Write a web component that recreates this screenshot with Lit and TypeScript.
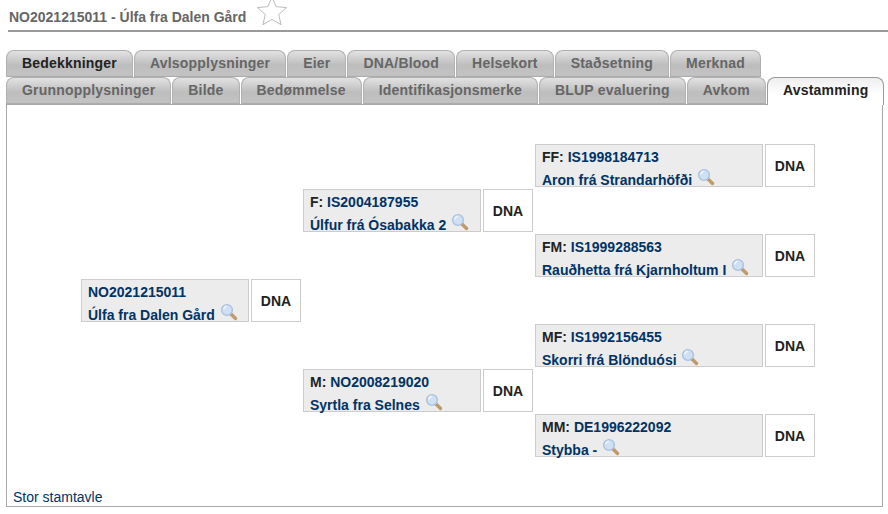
import { LitElement, html, css, svg } from "lit";
import { customElement } from "lit/decorators.js";

type Node = { row: number; col: number; label: string; name: string };

const NODES: Node[] = [
  { row: 1, col: 3, label: "FF: IS1998184713", name: "Aron frá Strandarhöfði" },
  { row: 2, col: 2, label: "F: IS2004187955", name: "Úlfur frá Ósabakka 2" },
  { row: 3, col: 3, label: "FM: IS1999288563", name: "Rauðhetta frá Kjarnholtum I" },
  { row: 4, col: 1, label: "NO2021215011", name: "Úlfa fra Dalen Gård" },
  { row: 5, col: 3, label: "MF: IS1992156455", name: "Skorri frá Blönduósi" },
  { row: 6, col: 2, label: "M: NO2008219020", name: "Syrtla fra Selnes" },
  { row: 7, col: 3, label: "MM: DE1996222092", name: "Stybba -" },
];

const ROW1 = ["Bedekkninger", "Avlsopplysninger", "Eier", "DNA/Blood", "Helsekort", "Staðsetning", "Merknad"];
const ROW2 = ["Grunnopplysninger", "Bilde", "Bedømmelse", "Identifikasjonsmerke", "BLUP evaluering", "Avkom", "Avstamming"];

const lens = svg`<svg class="lens" width="18" height="18" viewBox="0 0 18 18" aria-hidden="true">
  <line x1="11" y1="11" x2="15.5" y2="15.5" stroke="#c09a6b" stroke-width="3.4" stroke-linecap="round"/>
  <circle cx="7" cy="7" r="5.4" fill="#cfe0f3" stroke="#a9c2de" stroke-width="1.4"/>
  <path d="M3.8 6.4a3.4 3.4 0 0 1 3-3" fill="none" stroke="#f4f8fd" stroke-width="1.2"/>
</svg>`;

@customElement("app-root")
export class AppRoot extends LitElement {
  static styles = css`
    :host {
      display: block;
      width: 888px;
      height: 514px;
      overflow: hidden;
      background: #fff;
      font-family: "Liberation Sans", Arial, sans-serif;
      box-sizing: border-box;
      padding-left: 6px;
    }
    .head {
      margin-left: 2px;
      height: 30px;
      border-bottom: 2px solid #999;
      display: flex;
      align-items: flex-end;
      box-sizing: content-box;
      overflow: hidden;
    }
    .title {
      font-size: 14px;
      font-weight: bold;
      color: #666;
      line-height: 16px;
      padding-bottom: 5px;
      padding-left: 1px;
    }
    .star {
      display: block;
      margin-left: 10px;
      margin-bottom: 5px;
    }
    .tabs {
      margin-top: 18px;
      display: flex;
      flex-direction: column;
      height: 54px;
    }
    .row {
      display: flex;
      height: 27px;
      padding-left: 0;
    }
    .tab {
      box-sizing: border-box;
      height: 27px;
      margin-right: 1px;
      border: 1px solid #b0b0b0;
      border-bottom: 0;
      border-radius: 8px 8px 0 0;
      background: linear-gradient(#e2e2e2, #bdbdbd 55%, #c4c4c4);
      box-shadow: inset 0 -2px 1px -1px #aaa;
      font-size: 14px;
      font-weight: bold;
      color: #666;
      text-align: center;
      line-height: 24px;
      padding: 0 15px;
      white-space: nowrap;
      letter-spacing: 0.2px;
    }
    .tab.dark { color: #222; }
    .tab.on {
      background: linear-gradient(#eee, #fff 60%);
      box-shadow: none;
      color: #222;
      height: 28px;
      position: relative;
      z-index: 1;
      border-color: #999;
    }
    .panel {
      box-sizing: border-box;
      height: 403px;
      width: 877px;
      border: 1px solid #a8a8a8;
      border-top-color: #a8a8a8;
      display: flex;
      flex-direction: column;
      justify-content: space-between;
      background: #fff;
    }
    .tree {
      display: grid;
      grid-template-columns: 220px 230px 280px;
      grid-template-rows: repeat(7, 43px);
      row-gap: 2px;
      column-gap: 2px;
      margin: 39px 0 0 74px;
    }
    .node {
      display: flex;
      gap: 2px;
      min-width: 0;
    }
    .box {
      flex: 1;
      box-sizing: border-box;
      border: 1px solid #ccc;
      background: #ececec;
      padding: 2px 6px 0;
      font-size: 14px;
      font-weight: bold;
      line-height: 21px;
      color: #003366;
      white-space: nowrap;
    }
    .box b { color: #222; }
    .lens { vertical-align: -1px; margin-left: 1px; }
    .dna {
      box-sizing: border-box;
      width: 50px;
      border: 1px solid #ccc;
      background: #fff;
      display: flex;
      align-items: center;
      justify-content: center;
      font-size: 14px;
      font-weight: bold;
      color: #222;
    }
    .foot {
      font-size: 14px;
      line-height: 16px;
      color: #003366;
      padding: 0 0 1px 6px;
    }
  `;

  private renderLabel(label: string) {
    const i = label.indexOf(": ");
    if (i < 0) return html`${label}`;
    return html`<b>${label.slice(0, i + 1)}</b> ${label.slice(i + 2)}`;
  }

  render() {
    return html`
      <div class="head">
        <div class="title">NO2021215011 - Úlfa fra Dalen Gård</div>
        <svg class="star" width="32" height="30" viewBox="0 0 32 30" aria-hidden="true">
          <path d="M16 2l4.2 9.6 10.3 1-7.8 6.9 2.4 10.2L16 24.4l-9.1 5.3 2.4-10.2-7.8-6.9 10.3-1z" fill="#fff" stroke="#bbb" stroke-width="1"/>
        </svg>
      </div>
      <div class="tabs">
        <div class="row">
          ${ROW1.map((t, i) => html`<div class="tab ${i === 0 ? "dark" : ""}">${t}</div>`)}
        </div>
        <div class="row">
          ${ROW2.map((t, i) => html`<div class="tab ${i === 6 ? "on" : ""}">${t}</div>`)}
        </div>
      </div>
      <div class="panel">
        <div class="tree">
          ${NODES.map(
            (n) => html`<div class="node" style="grid-row:${n.row};grid-column:${n.col}">
              <div class="box">${this.renderLabel(n.label)}<br />${n.name} ${lens}</div>
              <div class="dna">DNA</div>
            </div>`
          )}
        </div>
        <div class="foot">Stor stamtavle</div>
      </div>
    `;
  }
}
